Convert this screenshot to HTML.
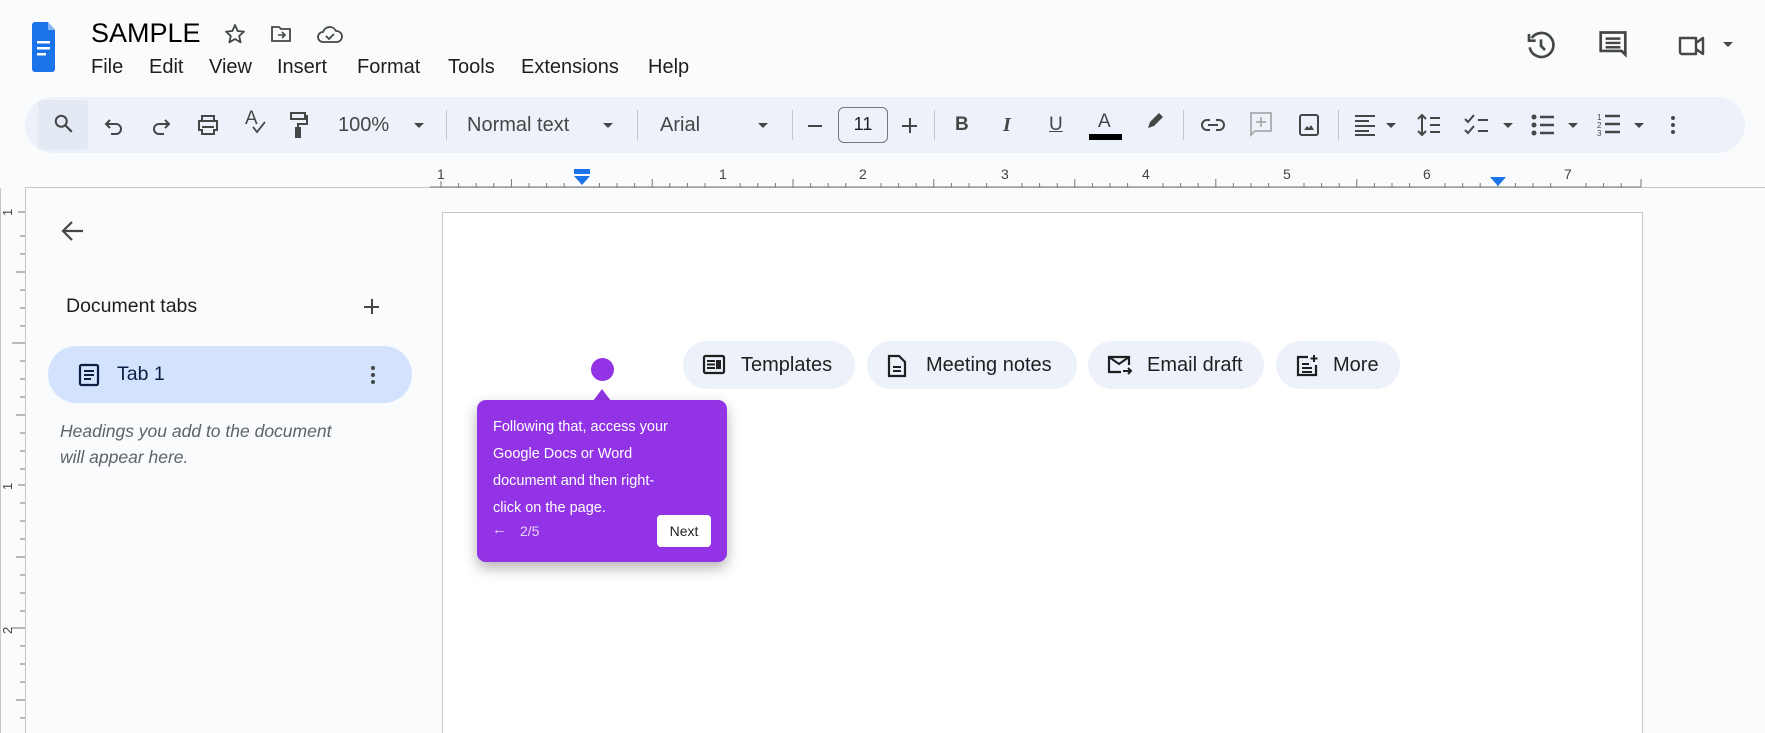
<!DOCTYPE html>
<html style="overflow:hidden;height:733px"><head><meta charset="utf-8"><style>
*{margin:0;padding:0;box-sizing:border-box}
body{width:1765px;height:733px;overflow:hidden;background:#f9fbfd;font-family:"Liberation Sans",Arial,sans-serif;color:#1f1f1f;position:relative}
.a{position:absolute}
.tb{position:absolute;left:25px;top:97px;width:1720px;height:56px;background:#edf2fa;border-radius:28px}
.ic{position:absolute;top:113px}
.sep{position:absolute;top:110px;width:1px;height:30px;background:#c4c7c5}
.t{position:absolute;font-size:20px;color:#444746;top:114px}
.car{position:absolute;top:123px;width:0;height:0;border-left:5px solid transparent;border-right:5px solid transparent;border-top:5px solid #444746}
.chip{position:absolute;top:341px;height:48px;background:#edf2fa;border-radius:24px;font-size:20px;color:#1f1f1f;line-height:48px}
.chip svg{position:absolute;left:19px;top:13px}
.chip span{position:absolute;left:58px}
</style></head><body>
<div class="a" style="left:0;top:188px;width:1px;height:545px;background:#c7c7c7"></div>
<div class="a" style="left:25px;top:188px;width:1px;height:545px;background:#c7c7c7"></div>
<svg class="a" style="left:0;top:188px" width="26" height="545">
<g stroke="#777" stroke-width="1">
<line x1="18" y1="24" x2="25" y2="24"/><line x1="20" y1="48" x2="25" y2="48"/><line x1="20" y1="66" x2="25" y2="66"/><line x1="16" y1="84" x2="25" y2="84"/><line x1="20" y1="102" x2="25" y2="102"/><line x1="20" y1="120" x2="25" y2="120"/><line x1="20" y1="138" x2="25" y2="138"/><line x1="12" y1="155" x2="25" y2="155"/><line x1="20" y1="173" x2="25" y2="173"/><line x1="20" y1="191" x2="25" y2="191"/><line x1="20" y1="209" x2="25" y2="209"/><line x1="16" y1="227" x2="25" y2="227"/><line x1="20" y1="245" x2="25" y2="245"/><line x1="20" y1="263" x2="25" y2="263"/><line x1="20" y1="281" x2="25" y2="281"/><line x1="18" y1="297" x2="25" y2="297"/><line x1="20" y1="315" x2="25" y2="315"/><line x1="20" y1="333" x2="25" y2="333"/><line x1="20" y1="351" x2="25" y2="351"/><line x1="16" y1="369" x2="25" y2="369"/><line x1="20" y1="387" x2="25" y2="387"/><line x1="20" y1="405" x2="25" y2="405"/><line x1="20" y1="423" x2="25" y2="423"/><line x1="12" y1="440" x2="25" y2="440"/><line x1="20" y1="458" x2="25" y2="458"/><line x1="20" y1="476" x2="25" y2="476"/><line x1="20" y1="494" x2="25" y2="494"/><line x1="16" y1="512" x2="25" y2="512"/><line x1="20" y1="530" x2="25" y2="530"/></g>
<text x="0" y="0" font-size="13" fill="#444" transform="translate(12,28) rotate(-90)">1</text>
<text x="0" y="0" font-size="13" fill="#444" transform="translate(12,302) rotate(-90)">1</text>
<text x="0" y="0" font-size="13" fill="#444" transform="translate(12,446) rotate(-90)">2</text>
</svg>

<svg class="a" style="left:32px;top:22px" width="23" height="50" viewBox="0 0 23 50"><path d="M3 0h13l7 8v39a3 3 0 0 1-3 3H3a3 3 0 0 1-3-3V3a3 3 0 0 1 3-3z" fill="#1a73e8"/><path d="M16 0l7 8h-7z" fill="#8ab4f8"/><rect x="5" y="19" width="13" height="2.5" fill="#fff"/><rect x="5" y="25" width="13" height="2.5" fill="#fff"/><rect x="5" y="31" width="9" height="2.5" fill="#fff"/></svg>
<div class="a" style="left:91px;top:18px;font-size:27px;color:#000">SAMPLE</div>
<svg class="a" style="left:223px;top:22px" width="24" height="24" viewBox="0 0 24 24"><path d="M12 3l2.6 6 6.4.6-4.8 4.3 1.4 6.4L12 17l-5.6 3.3 1.4-6.4L3 9.6l6.4-.6z" fill="none" stroke="#444746" stroke-width="1.8" stroke-linejoin="round"/></svg>
<svg class="a" style="left:270px;top:24px" width="22" height="20" viewBox="0 0 22 20"><path d="M2 3h7l2 2h9v12H2z" fill="none" stroke="#444746" stroke-width="1.8"/><path d="M8 11h7M12 8l3 3-3 3" fill="none" stroke="#444746" stroke-width="1.6"/></svg>
<svg class="a" style="left:316px;top:23px" width="28" height="22" viewBox="0 0 28 22"><path d="M7 19a5 5 0 0 1 0-10 7 7 0 0 1 13-1 5.5 5.5 0 0 1 1 11z" fill="none" stroke="#444746" stroke-width="1.8"/><path d="M10 13l3 3 5-5" fill="none" stroke="#444746" stroke-width="1.8"/></svg>
<div class="a" style="left:91px;top:56px;font-size:20px;color:#1f1f1f">
<span style="position:absolute;left:0">File</span><span style="position:absolute;left:58px">Edit</span><span style="position:absolute;left:118px">View</span><span style="position:absolute;left:186px">Insert</span><span style="position:absolute;left:266px">Format</span><span style="position:absolute;left:357px">Tools</span><span style="position:absolute;left:430px">Extensions</span><span style="position:absolute;left:557px">Help</span></div>

<svg class="a" style="left:1525px;top:30px" width="32" height="32" viewBox="0 0 24 24"><path d="M5 6a9 9 0 1 1-1.5 7" fill="none" stroke="#444746" stroke-width="2"/><path d="M3 3v5h5" fill="none" stroke="#444746" stroke-width="2"/><path d="M12 7v5l3 3" fill="none" stroke="#444746" stroke-width="2"/></svg>
<svg class="a" style="left:1598px;top:30px" width="30" height="32" viewBox="0 0 24 26"><path d="M2 2h20v18l-3-3H2z" fill="none" stroke="#444746" stroke-width="2.2"/><path d="M6 7h12M6 10.5h12M6 14h12" stroke="#444746" stroke-width="2"/></svg>
<svg class="a" style="left:1677px;top:32px" width="36" height="28" viewBox="0 0 36 28"><path d="M3 6h16v16H5a2 2 0 0 1-2-2zM19 11l7-5v16l-7-5" fill="none" stroke="#444746" stroke-width="2.4" stroke-linejoin="round"/></svg>
<div class="a" style="left:1723px;top:42px;border-left:5px solid transparent;border-right:5px solid transparent;border-top:5px solid #444746"></div>

<div class="tb"></div>
<div class="a" style="left:38px;top:100px;width:50px;height:50px;background:#e4eaf4;border-radius:4px"></div>
<svg class="ic" style="left:53px" width="22" height="22" viewBox="0 0 24 24"><circle cx="9" cy="9" r="6" fill="none" stroke="#444746" stroke-width="2.2"/><path d="M13.5 13.5l7 7" stroke="#444746" stroke-width="2.4"/></svg>
<svg class="ic" style="left:104px;top:116px" width="20" height="20" viewBox="0 0 20 20"><path d="M6 4L2 8l4 4M2 8h10a5 5 0 0 1 0 10H7" fill="none" stroke="#444746" stroke-width="2"/></svg>
<svg class="ic" style="left:151px;top:116px" width="20" height="20" viewBox="0 0 20 20"><path d="M14 4l4 4-4 4M18 8H8a5 5 0 0 0 0 10h5" fill="none" stroke="#444746" stroke-width="2"/></svg>
<svg class="ic" style="left:196px" width="24" height="24" viewBox="0 0 24 24"><path d="M6 3h12v5H6zM3 8h18v9h-3v4H6v-4H3z" fill="none" stroke="#444746" stroke-width="2"/><path d="M6 14h12" stroke="#444746" stroke-width="2"/></svg>
<div class="t" style="left:245px;top:108px;font-size:19px">A</div>
<svg class="ic" style="left:251px;top:121px" width="16" height="14" viewBox="0 0 16 14"><path d="M2 6l4 5 8-10" fill="none" stroke="#444746" stroke-width="1.8"/></svg>
<svg class="ic" style="left:289px;top:111px" width="20" height="28" viewBox="0 0 20 28"><path d="M2 2h14v6H2zM16 5h2v8H9v13" fill="none" stroke="#444746" stroke-width="2"/><rect x="7" y="17" width="4" height="9" fill="none" stroke="#444746" stroke-width="2"/></svg>
<div class="t" style="left:338px">100%</div><div class="car" style="left:414px"></div>
<div class="sep" style="left:446px"></div>
<div class="t" style="left:467px">Normal text</div><div class="car" style="left:603px"></div>
<div class="sep" style="left:637px"></div>
<div class="t" style="left:660px">Arial</div><div class="car" style="left:758px"></div>
<div class="sep" style="left:792px"></div>
<div class="a" style="left:808px;top:125px;width:14px;height:2px;background:#444746"></div>
<div class="a" style="left:838px;top:107px;width:50px;height:36px;border:1.5px solid #747775;border-radius:6px;text-align:center;line-height:33px;font-size:18px;color:#1f1f1f">11</div>
<div class="a" style="left:902px;top:125px;width:15px;height:2px;background:#444746"></div><div class="a" style="left:909px;top:118px;width:2px;height:15px;background:#444746"></div>
<div class="sep" style="left:934px"></div>
<div class="t" style="left:955px;font-weight:bold;font-size:19px">B</div>
<div class="t" style="left:1003px;font-style:italic;font-weight:bold;font-size:20px;font-family:'Liberation Serif',serif">I</div>
<div class="t" style="left:1049px;font-size:19px;text-decoration:underline">U</div>
<div class="t" style="left:1098px;font-size:19px;top:111px">A</div><div class="a" style="left:1089px;top:134px;width:33px;height:6px;background:#000"></div>
<svg class="ic" style="left:1144px;top:110px" width="22" height="22" viewBox="0 0 22 22"><path d="M4 18l2-6 9-9 4 4-9 9z" fill="#444746"/></svg>
<div class="sep" style="left:1183px"></div>
<svg class="ic" style="left:1200px;top:117px" width="26" height="16" viewBox="0 0 26 16"><path d="M10 3H7a5 5 0 0 0 0 10h3M16 3h3a5 5 0 0 1 0 10h-3M8 8h10" fill="none" stroke="#444746" stroke-width="2"/></svg>
<svg class="ic" style="left:1249px;top:111px" width="24" height="28" viewBox="0 0 24 28"><path d="M2 2h20v18H6l-4 4z" fill="none" stroke="#aaa" stroke-width="1.8"/><path d="M12 6v10M7 11h10" stroke="#aaa" stroke-width="1.8"/></svg>
<svg class="ic" style="left:1298px;top:113px" width="22" height="24" viewBox="0 0 22 24"><rect x="2" y="2" width="18" height="20" rx="2" fill="none" stroke="#444746" stroke-width="2"/><path d="M6 17l3-4 2 2 2-3 3 5z" fill="#444746"/></svg>
<div class="sep" style="left:1338px"></div>
<svg class="ic" style="left:1353px;top:114px" width="24" height="22" viewBox="0 0 24 22"><path d="M2 2h20M2 7h14M2 12h20M2 17h14M2 21h20" stroke="#444746" stroke-width="2"/></svg><div class="car" style="left:1386px"></div>
<svg class="ic" style="left:1416px;top:112px" width="26" height="26" viewBox="0 0 26 26"><path d="M6 3v20M2 7l4-4 4 4M2 19l4 4 4-4M14 6h10M14 13h10M14 20h10" fill="none" stroke="#444746" stroke-width="2"/></svg>
<svg class="ic" style="left:1463px;top:113px" width="28" height="24" viewBox="0 0 28 24"><path d="M2 6l3 3 6-7M2 17l3 3 6-7M15 7h10M15 18h10" fill="none" stroke="#444746" stroke-width="2"/></svg><div class="car" style="left:1503px"></div>
<svg class="ic" style="left:1530px;top:114px" width="26" height="22" viewBox="0 0 26 22"><circle cx="4" cy="3" r="2.5" fill="#444746"/><circle cx="4" cy="11" r="2.5" fill="#444746"/><circle cx="4" cy="19" r="2.5" fill="#444746"/><path d="M10 3h14M10 11h14M10 19h14" stroke="#444746" stroke-width="2.4"/></svg><div class="car" style="left:1568px"></div>
<svg class="ic" style="left:1596px;top:112px" width="26" height="26" viewBox="0 0 26 26"><text x="1" y="8" font-size="8" fill="#444746">1</text><text x="1" y="16" font-size="8" fill="#444746">2</text><text x="1" y="24" font-size="8" fill="#444746">3</text><path d="M9 4h15M9 12h15M9 20h15" stroke="#444746" stroke-width="2.4"/></svg><div class="car" style="left:1634px"></div>
<div class="a" style="left:1671px;top:116px;width:4px;height:4px;border-radius:2px;background:#444746;box-shadow:0 7px 0 #444746,0 14px 0 #444746"></div>

<div class="a" style="left:25px;top:187px;width:1740px;height:1px;background:#c7c7c7"></div>
<svg class="a" style="left:430px;top:165px" width="1230" height="24">
<line x1="0" y1="22" x2="1211" y2="22" stroke="#777"/>
<g font-size="14" fill="#444" font-family="Liberation Sans">
<text x="7" y="14">1</text><text x="289" y="14">1</text><text x="429" y="14">2</text><text x="571" y="14">3</text><text x="712" y="14">4</text><text x="853" y="14">5</text><text x="993" y="14">6</text><text x="1134" y="14">7</text></g>
<g stroke="#777" stroke-width="1">
<path d="M11 16v6M28.6 18v4M46.2 18v4M63.8 18v4M81.4 14v8M99 18v4M116.6 18v4M134.2 18v4M169.4 18v4M187 18v4M204.6 18v4M222.2 14v8M239.8 18v4M257.4 18v4M275 18v4M310.2 18v4M327.8 18v4M345.4 18v4M363 14v8M380.6 18v4M398.2 18v4M415.8 18v4M451 18v4M468.6 18v4M486.2 18v4M503.8 14v8M521.4 18v4M539 18v4M556.6 18v4M592 18v4M609.6 18v4M627.2 18v4M644.8 14v8M662.4 18v4M680 18v4M697.6 18v4M733 18v4M750.6 18v4M768.2 18v4M785.8 14v8M803.4 18v4M821 18v4M838.6 18v4M874 18v4M891.6 18v4M909.2 18v4M926.8 14v8M944.4 18v4M962 18v4M979.6 18v4M1015 18v4M1032.6 18v4M1050.2 18v4M1067.8 14v8M1085.4 18v4M1103 18v4M1120.6 18v4M1156 18v4M1173.6 18v4M1191.2 18v4M1211 14v8"/></g>
<rect x="144" y="4" width="16" height="5" fill="#1a73e8"/><path d="M144 11h16l-8 9z" fill="#1a73e8"/>
<path d="M1060 12h16l-8 9z" fill="#1a73e8"/>
</svg>

<svg class="a" style="left:61px;top:219px" width="24" height="24" viewBox="0 0 24 24"><path d="M22 12H3M11 3l-9 9 9 9" fill="none" stroke="#444746" stroke-width="2.2"/></svg>
<div class="a" style="left:66px;top:295px;font-size:19.5px;color:#1f1f1f">Document tabs</div>
<div class="a" style="left:364px;top:306px;width:15px;height:2px;background:#444746"></div><div class="a" style="left:370.5px;top:299px;width:2px;height:15px;background:#444746"></div>
<div class="a" style="left:48px;top:346px;width:364px;height:57px;background:#d3e3fd;border-radius:29px"></div>
<svg class="a" style="left:78px;top:363px" width="22" height="24" viewBox="0 0 22 24"><rect x="2" y="2" width="18" height="20" rx="1.5" fill="none" stroke="#0b1f45" stroke-width="2.2"/><path d="M6 8h10M6 12h10M6 16h7" stroke="#0b1f45" stroke-width="2"/></svg>
<div class="a" style="left:117px;top:363px;font-size:19.5px;color:#0b1f45">Tab 1</div>
<div class="a" style="left:371px;top:366px;width:4px;height:4px;border-radius:2px;background:#444746;box-shadow:0 7px 0 #444746,0 14px 0 #444746"></div>
<div class="a" style="left:60px;top:418px;font-size:17.5px;font-style:italic;color:#5f6368;line-height:26px">Headings you add to the document<br>will appear here.</div>

<div class="a" style="left:442px;top:212px;width:1201px;height:521px;background:#fff;border:1px solid #c7c7c7;border-bottom:none"></div>

<div class="chip" style="left:683px;width:172px"><svg width="24" height="22" viewBox="0 0 24 22"><rect x="2" y="2" width="20" height="17" rx="1.5" fill="none" stroke="#1f1f1f" stroke-width="2.2"/><path d="M5 7h8M5 10.5h8M5 14h8M15 7h3v7h-3z" stroke="#1f1f1f" stroke-width="2" fill="#1f1f1f"/></svg><span>Templates</span></div>
<div class="chip" style="left:867px;width:210px"><svg width="22" height="24" viewBox="0 0 22 24"><path d="M3 2h10l6 6v14H3z" fill="none" stroke="#1f1f1f" stroke-width="2.2"/><path d="M7 13h8M7 17h8" stroke="#1f1f1f" stroke-width="2"/></svg><span style="left:59px">Meeting notes</span></div>
<div class="chip" style="left:1088px;width:176px"><svg width="26" height="22" viewBox="0 0 26 22"><path d="M14 18H2V3h20v8" fill="none" stroke="#1f1f1f" stroke-width="2.2"/><path d="M2 3l10 7 10-7M16 17h8M21 14l3 3-3 3" fill="none" stroke="#1f1f1f" stroke-width="2"/></svg><span style="left:59px">Email draft</span></div>
<div class="chip" style="left:1276px;width:124px"><svg width="24" height="24" viewBox="0 0 24 24"><path d="M13 3H3v18h18V11" fill="none" stroke="#1f1f1f" stroke-width="2.2"/><path d="M7 10h7M7 14h10M7 18h10M19 1v7M15.5 4.5h7" stroke="#1f1f1f" stroke-width="2"/></svg><span style="left:57px">More</span></div>

<div class="a" style="left:591px;top:358px;width:23px;height:23px;border-radius:50%;background:#9233e6"></div>
<div class="a" style="left:593px;top:389px;width:0;height:0;border-left:9px solid transparent;border-right:9px solid transparent;border-bottom:12px solid #9233e6"></div>
<div class="a" style="left:477px;top:400px;width:250px;height:162px;background:#9233e6;border-radius:9px;box-shadow:0 6px 14px rgba(0,0,0,.3)"></div>
<div class="a" style="left:493px;top:414px;font-size:14.5px;line-height:27px;color:#fff;white-space:nowrap">Following that, access your<br>Google Docs or Word<br>document and then right-<br>click on the page.</div>
<div class="a" style="left:492px;top:521px;font-size:15px;color:#e6d4fa">&#8592;</div>
<div class="a" style="left:520px;top:523px;font-size:14px;color:#e6d4fa">2/5</div>
<div class="a" style="left:657px;top:515px;width:54px;height:32px;background:#fff;border-radius:4px;font-size:14px;line-height:32px;text-align:center;color:#1f1f1f">Next</div>
</body></html>
